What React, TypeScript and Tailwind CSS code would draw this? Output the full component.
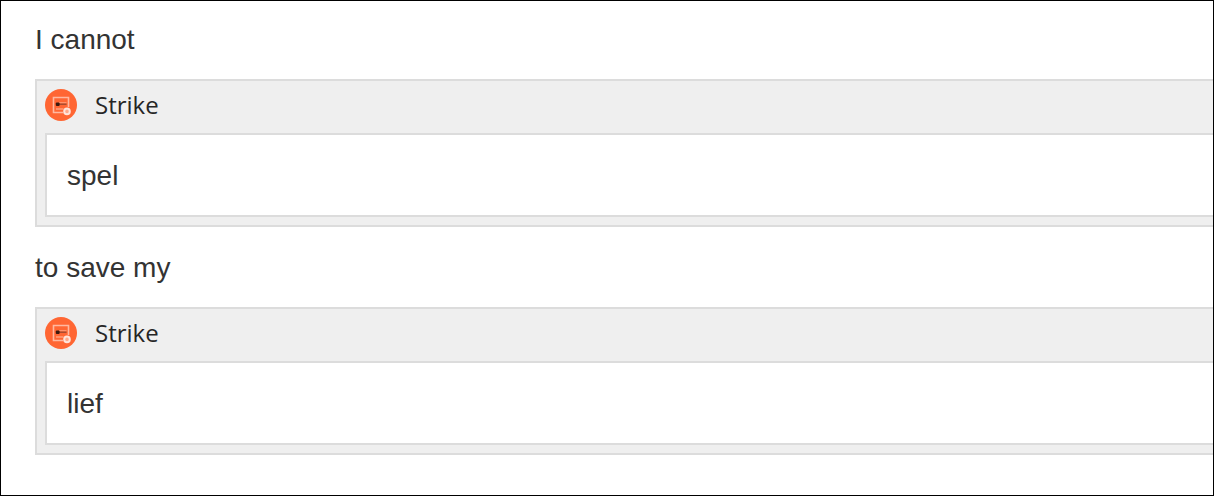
type MacroProps = {
  name: string
  children: React.ReactNode
}

function StrikeIcon() {
  return (
    <svg viewBox="0 0 32 32" className="h-8 w-8 shrink-0" aria-hidden="true">
      <circle cx="16" cy="16" r="16" fill="#ff6633" />
      <path d="M23.5 18V8.5H8.5v15h9.5" fill="none" stroke="#ffb8a0" strokeWidth="1.6" />
      <path d="M11 20h7.5" stroke="#ffa585" strokeWidth="1.4" />
      <path d="M14 13.8h7.5" stroke="#ffa585" strokeWidth="1" />
      <path d="M14 15.2h7.5" stroke="#a04a30" strokeWidth="1.4" />
      <rect x="10.8" y="13.6" width="3.8" height="3.4" rx="1" fill="#3a1a10" />
      <circle cx="22" cy="22.4" r="2.8" fill="#ffa98c" stroke="#ffe4da" strokeWidth="2" />
    </svg>
  )
}

function Macro({ name, children }: MacroProps) {
  return (
    <section className="border-2 border-r-0 border-[#dcdcdc] bg-[#efefef] pb-2 pl-2">
      <header className="flex items-center gap-[18px] pt-2 pb-3">
        <StrikeIcon />
        <span className="font-['Open_Sans',sans-serif] text-2xl leading-8 text-[#262626]">{name}</span>
      </header>
      <div className="border-2 border-r-0 border-[#dcdcdc] bg-white px-5 pt-[21px] pb-[19px]">
        <p>{children}</p>
      </div>
    </section>
  )
}

export default function App() {
  return (
    <main className="border border-black bg-white pt-[19px] pb-10 pl-[34px] font-['Liberation_Sans',Arial,sans-serif] text-[28px] leading-10 text-[#333333]">
      <p className="mb-[19px]">I cannot</p>
      <Macro name="Strike">spel</Macro>
      <p className="mt-[21px] mb-[19px]">to save my</p>
      <Macro name="Strike">lief</Macro>
    </main>
  )
}
